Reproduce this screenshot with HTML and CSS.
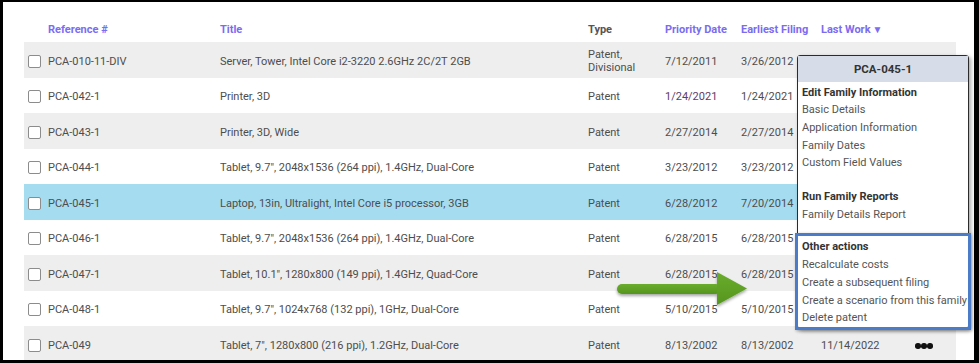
FILE: index.html
```html
<!DOCTYPE html>
<html lang="en">
<head>
    <meta charset="UTF-8">
    <meta name="viewport" content="width=device-width, initial-scale=1.0">
    <title>Patent Families</title>
    <link rel="stylesheet" href="styles.css">
</head>
<body>

<div class="frame">

    <!-- Families table -->
    <table class="families">
        <colgroup>
            <col class="c-check">
            <col class="c-ref">
            <col class="c-title">
            <col class="c-type">
            <col class="c-prio">
            <col class="c-early">
            <col class="c-last">
            <col class="c-act">
        </colgroup>
        <thead>
            <tr>
                <th></th>
                <th class="sort">Reference #</th>
                <th class="sort">Title</th>
                <th>Type</th>
                <th class="sort">Priority Date</th>
                <th class="sort">Earliest Filing</th>
                <th class="sort">Last Work<span class="caret">&#9660;</span></th>
                <th></th>
            </tr>
        </thead>
        <tbody>
            <tr class="alt">
                <td><span class="check"></span></td>
                <td>PCA-010-11-DIV</td>
                <td>Server, Tower, Intel Core i2-3220 2.6GHz 2C/2T 2GB</td>
                <td>Patent,<br>Divisional</td>
                <td>7/12/2011</td>
                <td>3/26/2012</td>
                <td></td>
                <td></td>
            </tr>
            <tr>
                <td><span class="check"></span></td>
                <td>PCA-042-1</td>
                <td>Printer, 3D</td>
                <td>Patent</td>
                <td class="recent">1/24/2021</td>
                <td>1/24/2021</td>
                <td></td>
                <td></td>
            </tr>
            <tr class="alt">
                <td><span class="check"></span></td>
                <td>PCA-043-1</td>
                <td>Printer, 3D, Wide</td>
                <td>Patent</td>
                <td>2/27/2014</td>
                <td>2/27/2014</td>
                <td></td>
                <td></td>
            </tr>
            <tr>
                <td><span class="check"></span></td>
                <td>PCA-044-1</td>
                <td>Tablet, 9.7", 2048x1536 (264 ppi), 1.4GHz, Dual-Core</td>
                <td>Patent</td>
                <td>3/23/2012</td>
                <td>3/23/2012</td>
                <td></td>
                <td></td>
            </tr>
            <tr class="selected">
                <td><span class="check"></span></td>
                <td>PCA-045-1</td>
                <td>Laptop, 13in, Ultralight, Intel Core i5 processor, 3GB</td>
                <td>Patent</td>
                <td>6/28/2012</td>
                <td>7/20/2014</td>
                <td></td>
                <td></td>
            </tr>
            <tr>
                <td><span class="check"></span></td>
                <td>PCA-046-1</td>
                <td>Tablet, 9.7", 2048x1536 (264 ppi), 1.4GHz, Dual-Core</td>
                <td>Patent</td>
                <td>6/28/2015</td>
                <td>6/28/2015</td>
                <td></td>
                <td></td>
            </tr>
            <tr class="alt">
                <td><span class="check"></span></td>
                <td>PCA-047-1</td>
                <td>Tablet, 10.1", 1280x800 (149 ppi), 1.4GHz, Quad-Core</td>
                <td>Patent</td>
                <td>6/28/2015</td>
                <td>6/28/2015</td>
                <td></td>
                <td></td>
            </tr>
            <tr>
                <td><span class="check"></span></td>
                <td>PCA-048-1</td>
                <td>Tablet, 9.7", 1024x768 (132 ppi), 1GHz, Dual-Core</td>
                <td>Patent</td>
                <td>5/10/2015</td>
                <td>5/10/2015</td>
                <td></td>
                <td></td>
            </tr>
            <tr class="alt">
                <td><span class="check"></span></td>
                <td>PCA-049</td>
                <td>Tablet, 7", 1280x800 (216 ppi), 1.2GHz, Dual-Core</td>
                <td>Patent</td>
                <td>8/13/2002</td>
                <td>8/13/2002</td>
                <td>11/14/2022</td>
                <td><span class="dots"><i></i><i></i><i></i></span></td>
            </tr>
        </tbody>
    </table>

    <!-- Actions menu for the selected family -->
    <div class="menu">
        <div class="menu-head">PCA-045-1</div>
        <div class="menu-group first">
            <div class="menu-title">Edit Family Information</div>
            <div class="menu-item">Basic Details</div>
            <div class="menu-item">Application Information</div>
            <div class="menu-item">Family Dates</div>
            <div class="menu-item">Custom Field Values</div>
        </div>
        <div class="menu-group reports">
            <div class="menu-title">Run Family Reports</div>
            <div class="menu-item">Family Details Report</div>
        </div>
        <div class="menu-group other">
            <div class="menu-title">Other actions</div>
            <div class="menu-item">Recalculate costs</div>
            <div class="menu-item">Create a subsequent filing</div>
            <div class="menu-item">Create a scenario from this family</div>
            <div class="menu-item">Delete patent</div>
        </div>
    </div>

    <!-- Callout arrow -->
    <svg class="arrow" width="140" height="44" viewBox="0 0 140 44">
        <defs>
            <linearGradient id="arrowFill" x1="0" y1="0" x2="0" y2="1">
                <stop offset="0" stop-color="#6aad2c"/>
                <stop offset="1" stop-color="#55951f"/>
            </linearGradient>
            <filter id="arrowShadow" x="-10%" y="-30%" width="120%" height="160%">
                <feDropShadow dx="0" dy="2" stdDeviation="1.5" flood-color="#000" flood-opacity="0.35"/>
            </filter>
        </defs>
        <g filter="url(#arrowShadow)" fill="url(#arrowFill)">
            <rect x="5" y="16" width="104" height="10" rx="5"/>
            <polygon points="105,4 135,20.5 105,37"/>
        </g>
    </svg>

</div>

</body>
</html>
```

FILE: styles.css
```css
/* Page frame */
body {
    margin: 0;
    background-color: #000000;
    font-family: Roboto, "Noto Sans", Arial, sans-serif;
}

.frame {
    position: relative;
    margin: 2px 5px 0 3px;
    height: 358px;
    padding: 15px 0 0 21px;
    box-sizing: border-box;
    background-color: #ffffff;
    overflow: hidden;
}

/* Families table */
.families {
    width: 932px;
    border-collapse: collapse;
    table-layout: fixed;
    font-size: 11px;
    color: #4d4d4d;
}

.c-check { width: 24px; }
.c-ref { width: 172px; }
.c-title { width: 368px; }
.c-type { width: 77px; }
.c-prio { width: 76px; }
.c-early { width: 80px; }
.c-last { width: 90px; }
.c-act { width: 45px; }

.families th {
    height: 25px;
    padding: 0;
    text-align: left;
    font-weight: bold;
    color: #555555;
    white-space: nowrap;
}

.families th.sort {
    color: #7b6cf0;
}

.caret {
    font-size: 10px;
    margin-left: 2px;
}

.families tbody tr {
    height: 35.5px;
}

.families td {
    padding: 3px 0 0;
    line-height: 13px;
    white-space: nowrap;
}

.families tr.alt td {
    background-color: #eeeeee;
}

.families tr.selected td {
    background-color: #a6dcf0;
}

.families td.recent {
    color: #5d3d6a;
}

.check {
    display: block;
    width: 11px;
    height: 11px;
    margin-left: 4px;
    border: 1px solid #8c8c8c;
    border-radius: 2px;
    background-color: #ffffff;
}

.dots {
    display: inline-flex;
    gap: 0.5px;
    margin-left: 4px;
}

.dots i {
    width: 5.5px;
    height: 5.5px;
    border-radius: 50%;
    background-color: #111111;
}

/* Actions menu */
.menu {
    position: absolute;
    left: 794px;
    top: 53px;
    width: 170px;
    border: 1px solid #2c2c2c;
    border-radius: 3px;
    background-color: #ffffff;
    box-shadow: 2px 2px 4px rgba(0, 0, 0, 0.35);
    font-size: 11px;
    color: #555555;
    line-height: 17.7px;
}

.menu-head {
    height: 26px;
    line-height: 26px;
    text-align: center;
    font-weight: bold;
    font-size: 11.5px;
    color: #333333;
    background-color: #d6dde9;
}

.menu-group {
    padding: 0 0 0 4px;
}

.menu-group.first {
    padding-top: 1.5px;
}

.menu-title {
    font-weight: bold;
    color: #333333;
}

.menu-group.reports {
    margin-top: 16px;
}

.menu-group.other {
    position: relative;
    margin-top: 10px;
    padding-top: 5px;
    padding-bottom: 1px;
}

.menu-group.other::before {
    content: "";
    position: absolute;
    left: -3px;
    right: -3px;
    top: 0;
    bottom: -2px;
    border: 3px solid #4a7cc7;
    box-shadow: 1px 1px 3px rgba(0, 0, 0, 0.3);
}

/* Callout arrow */
.arrow {
    position: absolute;
    left: 609px;
    top: 266px;
}
```
